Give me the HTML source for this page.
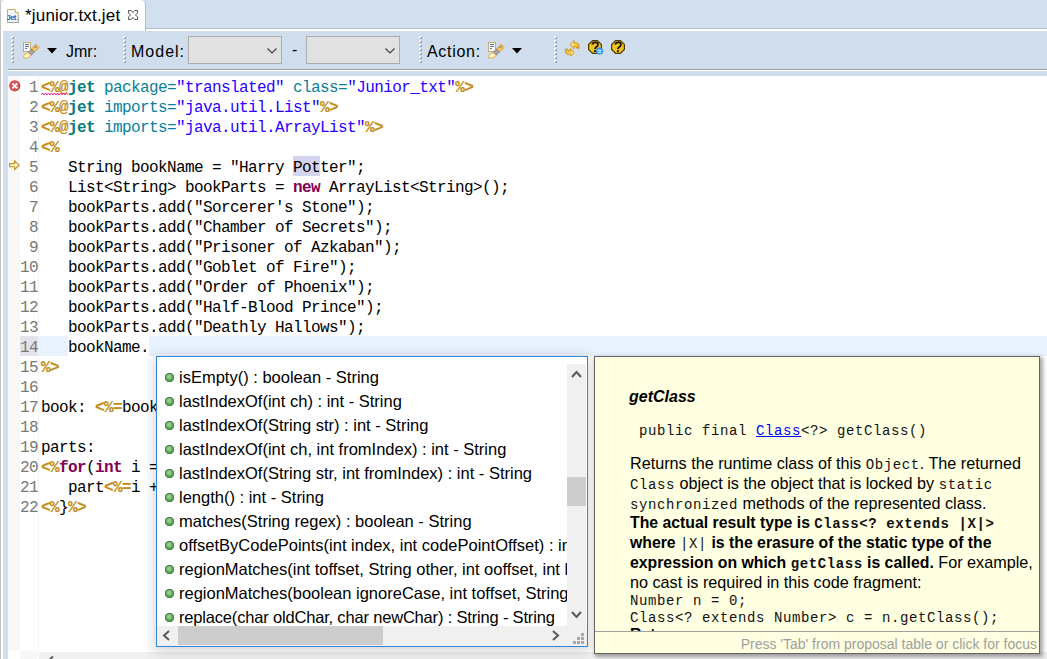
<!DOCTYPE html>
<html><head><meta charset="utf-8">
<style>
*{margin:0;padding:0;box-sizing:border-box}
html,body{width:1047px;height:659px;overflow:hidden;background:#d1dfee;position:relative;font-family:"Liberation Sans",sans-serif}
.a{position:absolute}
.ui{font-family:"Liberation Sans",sans-serif;font-size:15px;color:#000;white-space:pre}
.mono{font-family:"Liberation Mono",monospace}
/* editor */
#code .ln{position:absolute;left:0;height:20px;line-height:20px;font-size:16px;letter-spacing:-0.6px;white-space:pre;font-family:"Liberation Mono",monospace;color:#000}
#nums .n{position:absolute;right:0;height:20px;line-height:20px;font-size:16px;letter-spacing:-0.6px;font-family:"Liberation Mono",monospace;color:#787878;text-align:right}
.d{color:#c48c12;font-weight:bold;-webkit-text-stroke:0.15px #c48c12}
.jk{color:#0a7b7b;font-weight:bold}
.at{color:#08809a}
.st{color:#2a00ff}
.kw{color:#7f0055;font-weight:bold}
.grip{position:absolute;width:3px}
.grip i{position:absolute;left:0;width:2px;height:2px;background:#f2f5f9;box-shadow:1px 1px 0 #939ba6}
.combo{position:absolute;top:36px;height:28px;background:#e1e1e1;border:1px solid #adadad}
.item{position:absolute;left:0;height:24px;line-height:24px;white-space:pre;font-size:16.5px;color:#000}
.bul{position:absolute;left:8px;top:8px;width:9px;height:9px;border-radius:50%;background:radial-gradient(circle at 45% 40%,#a4d4a4 0,#5aa05a 55%,#3a8a4a 100%);box-shadow:inset 0 0 0 0.8px #2e7a3e}
.info{font-size:16.2px;line-height:20px;color:#000;white-space:pre}
.info code{font-family:"Liberation Mono",monospace;font-size:14px;letter-spacing:0.6px;color:#111}
.info b{font-size:15.8px}
</style></head><body>

<!-- tab -->
<div class="a" style="left:145px;top:28px;width:902px;height:1px;background:#b3bad3"></div>
<div class="a" style="left:0;top:29px;width:1047px;height:2px;background:#fff"></div>
<div class="a" style="left:0;top:0;width:146px;height:31px;background:#fff;border-left:1px solid #c2c2c2;border-right:1px solid #b3bad3;border-top-left-radius:4px;border-top-right-radius:5px;border-bottom:none"></div>
<div class="a" style="left:0;top:29px;width:1px;height:630px;background:#c2c2c2"></div>
<div class="a" style="left:1px;top:31px;width:2px;height:628px;background:#fff"></div>
<!-- tab icon -->
<svg class="a" style="left:7px;top:9px" width="12" height="14" viewBox="0 0 12 14">
<path d="M0.5 13.5V0.5H8.2V3.6H11.3V13.5" fill="#f0f5fc" stroke="#c9ac5c"/>
<path d="M0.5 13.5H11.3V9" fill="none" stroke="#a0a0a0"/>
<text x="-0.6" y="11" font-family="Liberation Sans" font-weight="bold" font-size="7.6" letter-spacing="-0.5" fill="#2466c0">Jet</text>
</svg>
<div class="a ui" style="left:25px;top:6px;font-size:17px;line-height:20px;letter-spacing:0.18px">*junior.txt.jet</div>
<svg class="a" style="left:128px;top:10px" width="10" height="10" viewBox="0 0 10 10">
<path d="M0.5 0.5H3.2L5 2.6L6.8 0.5H9.5V3.2L7.4 5L9.5 6.8V9.5H6.8L5 7.4L3.2 9.5H0.5V6.8L2.6 5L0.5 3.2Z" fill="#fff" stroke="#555" stroke-width="1"/>
</svg>

<!-- toolbar -->
<div class="a" style="left:3px;top:31px;width:1044px;height:38px;background:#cfdded"></div>
<div class="a" style="left:8px;top:69px;width:1039px;height:1px;background:#a0a0a0"></div>
<div class="a" style="left:8px;top:70px;width:1039px;height:1px;background:#fff"></div>
<div class="a" style="left:3px;top:71px;width:1044px;height:5px;background:#cfdded"></div>

<div class="grip" style="left:11px;top:36px"><i style="top:0"></i><i style="top:4px"></i><i style="top:8px"></i><i style="top:12px"></i><i style="top:16px"></i><i style="top:20px"></i><i style="top:24px"></i></div>
<!-- jmr icon -->
<svg class="a" style="left:23px;top:42px" width="17" height="17" viewBox="0 0 17 17">
<rect x="0.5" y="0.5" width="7" height="9" fill="#fbfcff" stroke="#c2ae70"/>
<path d="M2 2.5h4M2 4.5h4M2 6.5h2" stroke="#5073b0" stroke-width="1"/>
<path d="M8.5 7L12.8 2.2L16 5.4L11.4 10Z" fill="#f3cc62" stroke="#e39016" stroke-width="0.9"/>
<circle cx="13.2" cy="4.6" r="0.7" fill="#3b5fa8"/><circle cx="12.2" cy="5.6" r="0.7" fill="#3b5fa8"/>
<path d="M5 10.4L8.5 7L11.4 10L8 13.6Z" fill="#a6a2b0" stroke="#7d6a4a" stroke-width="0.6"/>
<path d="M0.5 15.8L1.2 12.6L5 10.4L8 13.6L4.8 16Z" fill="#fff6c4" stroke="#e8a030" stroke-width="0.8"/>
</svg>
<svg class="a" style="left:47px;top:48px" width="10" height="6"><path d="M0 0H10L5 5.5Z" fill="#000"/></svg>
<div class="a ui" style="left:66px;top:42px;line-height:20px;font-size:16px">Jmr:</div>

<div class="grip" style="left:123px;top:36px"><i style="top:0"></i><i style="top:4px"></i><i style="top:8px"></i><i style="top:12px"></i><i style="top:16px"></i><i style="top:20px"></i><i style="top:24px"></i></div>
<div class="a ui" style="left:131px;top:42px;line-height:20px;font-size:16px;letter-spacing:1px">Model:</div>
<div class="combo" style="left:188px;width:94px"></div>
<svg class="a" style="left:267px;top:48px" width="10" height="6"><path d="M0.5 0.5L5 5L9.5 0.5" fill="none" stroke="#404040" stroke-width="1.2"/></svg>
<div class="a ui" style="left:292px;top:40px;line-height:20px;font-size:16px">-</div>
<div class="combo" style="left:306px;width:94px"></div>
<svg class="a" style="left:385px;top:48px" width="10" height="6"><path d="M0.5 0.5L5 5L9.5 0.5" fill="none" stroke="#404040" stroke-width="1.2"/></svg>

<div class="grip" style="left:419px;top:36px"><i style="top:0"></i><i style="top:4px"></i><i style="top:8px"></i><i style="top:12px"></i><i style="top:16px"></i><i style="top:20px"></i><i style="top:24px"></i></div>
<div class="a ui" style="left:427px;top:42px;line-height:20px;font-size:16px;letter-spacing:0.7px">Action:</div>
<svg class="a" style="left:488px;top:42px" width="17" height="17" viewBox="0 0 17 17">
<rect x="0.5" y="0.5" width="7" height="9" fill="#fbfcff" stroke="#c2ae70"/>
<path d="M2 2.5h4M2 4.5h4M2 6.5h2" stroke="#5073b0" stroke-width="1"/>
<path d="M8.5 7L12.8 2.2L16 5.4L11.4 10Z" fill="#f3cc62" stroke="#e39016" stroke-width="0.9"/>
<circle cx="13.2" cy="4.6" r="0.7" fill="#3b5fa8"/><circle cx="12.2" cy="5.6" r="0.7" fill="#3b5fa8"/>
<path d="M5 10.4L8.5 7L11.4 10L8 13.6Z" fill="#a6a2b0" stroke="#7d6a4a" stroke-width="0.6"/>
<path d="M0.5 15.8L1.2 12.6L5 10.4L8 13.6L4.8 16Z" fill="#fff6c4" stroke="#e8a030" stroke-width="0.8"/>
</svg>
<svg class="a" style="left:512px;top:48px" width="10" height="6"><path d="M0 0H10L5 5.5Z" fill="#000"/></svg>

<div class="grip" style="left:554px;top:36px"><i style="top:0"></i><i style="top:4px"></i><i style="top:8px"></i><i style="top:12px"></i><i style="top:16px"></i><i style="top:20px"></i><i style="top:24px"></i></div>
<!-- sync icon -->
<svg class="a" style="left:564px;top:39px" width="17" height="17" viewBox="0 0 17 17">
<defs><linearGradient id="gy" x1="0" y1="0" x2="1" y2="1"><stop offset="0" stop-color="#fff6c0"/><stop offset="0.6" stop-color="#f2c84a"/><stop offset="1" stop-color="#e0a020"/></linearGradient></defs>
<path d="M6.2 5.6L10 1.4V3.8H12.6Q15 4.2 15 7V9.2H12.8Q12.8 7.6 11.4 7.6H10V9.8Z" fill="url(#gy)" stroke="#d38e12" stroke-width="0.9" stroke-linejoin="round"/>
<path d="M6.2 5.6L10 1.4V3.8H12.6Q15 4.2 15 7V9.2H12.8Q12.8 7.6 11.4 7.6H10V9.8Z" transform="rotate(180 8.2 9.6)" fill="url(#gy)" stroke="#d38e12" stroke-width="0.9" stroke-linejoin="round"/>
</svg>
<!-- help icons -->
<svg class="a" style="left:588px;top:40px" width="16" height="15" viewBox="0 0 16 15">
<path d="M4.6 0.6H9.4L13.4 4.6V9.4L9.4 13.4H4.6L0.6 9.4V4.6Z" fill="#f2c21e" stroke="#4e3a08" stroke-width="1.2"/>
<path d="M4.4 4.6Q4.6 2.4 7.2 2.4Q10 2.4 10 4.6Q10 6.2 8 7.2Q7.2 7.8 7 9.2" fill="none" stroke="#111" stroke-width="1.7"/>
<rect x="6" y="10.2" width="1.8" height="1.8" fill="#111"/>
<circle cx="11.6" cy="11" r="3.6" fill="#2d8ef0"/>
<path d="M9.6 10.2h4M9.6 12.2h4" stroke="#fff" stroke-width="1"/>
</svg>
<svg class="a" style="left:611px;top:40px" width="15" height="15" viewBox="0 0 15 15">
<path d="M4.6 0.6H9.4L13.4 4.6V9.4L9.4 13.4H4.6L0.6 9.4V4.6Z" fill="#f2c21e" stroke="#4e3a08" stroke-width="1.2"/>
<path d="M4.4 4.6Q4.6 2.4 7.2 2.4Q10 2.4 10 4.6Q10 6.2 8 7.2Q7.2 7.8 7 9.2" fill="none" stroke="#111" stroke-width="1.7"/>
<rect x="6" y="10.2" width="1.8" height="1.8" fill="#111"/>
</svg>

<!-- editor -->
<div class="a" style="left:8px;top:76px;width:1039px;height:583px;background:#fff"></div>
<div class="a" style="left:8px;top:76px;width:12px;height:575px;background:#f8f8f8"></div>
<div class="a" style="left:38px;top:76px;width:1px;height:575px;background:#f3f3f3"></div>
<!-- current line -->
<div class="a" style="left:39px;top:336px;width:1008px;height:20px;background:#e8f2fe"></div>
<div class="a" style="left:68px;top:336px;width:81px;height:20px;background:#fff"></div>
<div class="a" style="left:20px;top:336px;width:18px;height:20px;background:#e4e2ea"></div>
<!-- Pot highlight -->
<div class="a" style="left:293px;top:156px;width:27px;height:20px;background:#d4d4f0"></div>

<!-- error icon -->
<svg class="a" style="left:9px;top:80px" width="12" height="12" viewBox="0 0 12 12">
<circle cx="5.8" cy="5.8" r="5.6" fill="#d04848"/>
<circle cx="5.8" cy="5.8" r="4.2" fill="#dc5c5c"/>
<path d="M3.3 3.3L8.3 8.3M8.3 3.3L3.3 8.3" stroke="#fff" stroke-width="1.8"/>
</svg>
<!-- arrow icon -->
<svg class="a" style="left:9px;top:160px" width="12" height="11" viewBox="0 0 12 11">
<path d="M0.6 3.6H5.6V0.9L10.2 5.2L5.6 9.5V6.8H0.6Z" fill="#fffbe6" stroke="#c98e18" stroke-width="1.1" stroke-linejoin="miter"/>
</svg>

<div id="nums" class="a" style="left:20px;top:78px;width:18px;height:575px">
<div class="n" style="top:0">1</div><div class="n" style="top:20px">2</div><div class="n" style="top:40px">3</div><div class="n" style="top:60px">4</div><div class="n" style="top:80px">5</div><div class="n" style="top:100px">6</div><div class="n" style="top:120px">7</div><div class="n" style="top:140px">8</div><div class="n" style="top:160px">9</div><div class="n" style="top:180px">10</div><div class="n" style="top:200px">11</div><div class="n" style="top:220px">12</div><div class="n" style="top:240px">13</div><div class="n" style="top:260px">14</div><div class="n" style="top:280px">15</div><div class="n" style="top:300px">16</div><div class="n" style="top:320px">17</div><div class="n" style="top:340px">18</div><div class="n" style="top:360px">19</div><div class="n" style="top:380px">20</div><div class="n" style="top:400px">21</div><div class="n" style="top:420px">22</div>
</div>

<div id="code" class="a" style="left:41px;top:78px;width:1006px;height:575px">
<div class="ln" style="top:0"><span class="d">&lt;%@</span><span class="jk">jet</span> <span class="at">package=</span><span class="st">"translated"</span> <span class="at">class=</span><span class="st">"Junior_txt"</span><span class="d">%&gt;</span></div>
<div class="ln" style="top:20px"><span class="d">&lt;%@</span><span class="jk">jet</span> <span class="at">imports=</span><span class="st">"java.util.List"</span><span class="d">%&gt;</span></div>
<div class="ln" style="top:40px"><span class="d">&lt;%@</span><span class="jk">jet</span> <span class="at">imports=</span><span class="st">"java.util.ArrayList"</span><span class="d">%&gt;</span></div>
<div class="ln" style="top:60px"><span class="d">&lt;%</span></div>
<div class="ln" style="top:80px">   String bookName = "Harry Potter";</div>
<div class="ln" style="top:100px">   List&lt;String&gt; bookParts = <span class="kw">new</span> ArrayList&lt;String&gt;();</div>
<div class="ln" style="top:120px">   bookParts.add("Sorcerer's Stone");</div>
<div class="ln" style="top:140px">   bookParts.add("Chamber of Secrets");</div>
<div class="ln" style="top:160px">   bookParts.add("Prisoner of Azkaban");</div>
<div class="ln" style="top:180px">   bookParts.add("Goblet of Fire");</div>
<div class="ln" style="top:200px">   bookParts.add("Order of Phoenix");</div>
<div class="ln" style="top:220px">   bookParts.add("Half-Blood Prince");</div>
<div class="ln" style="top:240px">   bookParts.add("Deathly Hallows");</div>
<div class="ln" style="top:260px">   bookName.</div>
<div class="ln" style="top:280px"><span class="d">%&gt;</span></div>
<div class="ln" style="top:320px">book: <span class="d">&lt;%=</span>bookName<span class="d">%&gt;</span></div>
<div class="ln" style="top:360px">parts:</div>
<div class="ln" style="top:380px"><span class="d">&lt;%</span><span class="kw">for</span>(<span class="kw">int</span> i = 0; i &lt; bookParts.size(); i++) {<span class="d">%&gt;</span></div>
<div class="ln" style="top:400px">   part<span class="d">&lt;%=</span>i + 1<span class="d">%&gt;</span>: <span class="d">&lt;%=</span>bookParts.get(i)<span class="d">%&gt;</span></div>
<div class="ln" style="top:420px"><span class="d">&lt;%</span>}<span class="d">%&gt;</span></div>
</div>
<!-- squiggle -->
<svg class="a" style="left:41px;top:92px" width="27" height="4" viewBox="0 0 27 4"><path d="M0 3L1.5 1L3 3L4.5 1L6 3L7.5 1L9 3L10.5 1L12 3L13.5 1L15 3L16.5 1L18 3L19.5 1L21 3L22.5 1L24 3L25.5 1L27 3" fill="none" stroke="#ff1090" stroke-width="0.9"/></svg>

<!-- editor h-scrollbar -->
<div class="a" style="left:39px;top:652px;width:1008px;height:7px;background:#f0f0f0"></div>
<div class="a" style="left:20px;top:651px;width:18px;height:8px;background:#f7f7f7"></div>
<svg class="a" style="left:47px;top:656px" width="8" height="3"><path d="M6 0.5L3 3" stroke="#606060" stroke-width="2"/></svg>


<!-- completion popup shadow -->
<div class="a" style="left:156px;top:356px;width:432px;height:291px;box-shadow:0 3px 12px 2px rgba(0,0,0,0.16)"></div>
<div class="a" style="left:594px;top:356px;width:446px;height:298px;box-shadow:2px 2px 4px 1px rgba(0,0,0,0.35)"></div>
<!-- completion popup -->
<div class="a" style="left:156px;top:356px;width:432px;height:291px;background:#fff;border:1px solid #2f86dc;overflow:hidden">
 <div class="a" style="left:0;top:0;width:410px;height:269px;overflow:hidden">
  <div class="item" style="top:8px"><i class="bul"></i><span class="a" style="left:22px;top:0">isEmpty() : boolean - String</span></div>
  <div class="item" style="top:32px"><i class="bul"></i><span class="a" style="left:22px;top:0">lastIndexOf(int ch) : int - String</span></div>
  <div class="item" style="top:56px"><i class="bul"></i><span class="a" style="left:22px;top:0">lastIndexOf(String str) : int - String</span></div>
  <div class="item" style="top:80px"><i class="bul"></i><span class="a" style="left:22px;top:0">lastIndexOf(int ch, int fromIndex) : int - String</span></div>
  <div class="item" style="top:104px"><i class="bul"></i><span class="a" style="left:22px;top:0">lastIndexOf(String str, int fromIndex) : int - String</span></div>
  <div class="item" style="top:128px"><i class="bul"></i><span class="a" style="left:22px;top:0">length() : int - String</span></div>
  <div class="item" style="top:152px"><i class="bul"></i><span class="a" style="left:22px;top:0">matches(String regex) : boolean - String</span></div>
  <div class="item" style="top:176px"><i class="bul"></i><span class="a" style="left:22px;top:0">offsetByCodePoints(int index, int codePointOffset) : int - String</span></div>
  <div class="item" style="top:200px"><i class="bul"></i><span class="a" style="left:22px;top:0">regionMatches(int toffset, String other, int ooffset, int len) : boolean - String</span></div>
  <div class="item" style="top:224px"><i class="bul"></i><span class="a" style="left:22px;top:0">regionMatches(boolean ignoreCase, int toffset, String other, int ooffset, int len) : boolean - String</span></div>
  <div class="item" style="top:248px"><i class="bul"></i><span class="a" style="left:22px;top:0;letter-spacing:-0.18px">replace(char oldChar, char newChar) : String - String</span></div>
 </div>
 <!-- v scrollbar -->
 <div class="a" style="left:410px;top:7px;width:19px;height:262px;background:#f0f0f0"></div>
 <div class="a" style="left:410px;top:120px;width:19px;height:29px;background:#cdcdcd"></div>
 <svg class="a" style="left:414px;top:13px" width="11" height="8"><path d="M1 7L5.5 2L10 7" fill="none" stroke="#5a5a5a" stroke-width="2"/></svg>
 <svg class="a" style="left:414px;top:254px" width="11" height="8"><path d="M1 1L5.5 6L10 1" fill="none" stroke="#5a5a5a" stroke-width="2"/></svg>
 <!-- h scrollbar -->
 <div class="a" style="left:0;top:269px;width:430px;height:20px;background:#f0f0f0"></div>
 <div class="a" style="left:21px;top:269px;width:205px;height:19px;background:#cdcdcd"></div>
 <svg class="a" style="left:5px;top:273px" width="8" height="11"><path d="M7 1L2 5.5L7 10" fill="none" stroke="#5a5a5a" stroke-width="2"/></svg>
 <svg class="a" style="left:395px;top:273px" width="8" height="11"><path d="M1 1L6 5.5L1 10" fill="none" stroke="#5a5a5a" stroke-width="2"/></svg>
 <svg class="a" style="left:416px;top:276px" width="11" height="11"><g fill="#a8a8a8"><rect x="8" y="0" width="3" height="3"/><rect x="4" y="4" width="3" height="3"/><rect x="8" y="4" width="3" height="3"/><rect x="0" y="8" width="3" height="3"/><rect x="4" y="8" width="3" height="3"/><rect x="8" y="8" width="3" height="3"/></g></svg>
</div>

<!-- info popup -->
<div class="a" style="left:594px;top:356px;width:446px;height:298px;background:#ffffe1;border:1px solid #646464;overflow:hidden">
 <div class="a" style="left:34px;top:27px;font-size:16px;line-height:26px;font-weight:bold;font-style:italic;white-space:pre">getClass</div>
 <div class="a mono" style="left:35px;top:66px;font-size:14px;letter-spacing:0.6px;line-height:17px;white-space:pre;color:#111"> public final <span style="color:#0000ff;text-decoration:underline">Class</span>&lt;?&gt; getClass()</div>
 <div class="a" style="left:0;top:0;width:444px;height:274px;overflow:hidden">
  <div class="a info" style="left:35px;top:96px">Returns the runtime class of this <code>Object</code>. The returned</div>
  <div class="a info" style="left:35px;top:116px"><code>Class</code> object is the object that is locked by <code>static</code></div>
  <div class="a info" style="left:35px;top:136px"><code>synchronized</code> methods of the represented class.</div>
  <div class="a info" style="left:35px;top:155px"><b>The actual result type is <code>Class&lt;? extends |X|&gt;</code></b></div>
  <div class="a info" style="left:35px;top:175px"><b>where </b><code>|X|</code><b> is the erasure of the static type of the</b></div>
  <div class="a info" style="left:35px;top:195px"><b>expression on which <code>getClass</code> is called.</b> For example,</div>
  <div class="a info" style="left:35px;top:215px">no cast is required in this code fragment:</div>
  <div class="a mono" style="left:35px;top:236px;font-size:14px;letter-spacing:0.6px;line-height:17px;white-space:pre;color:#111">Number n = 0;
Class&lt;? extends Number&gt; c = n.getClass();</div>
  <div class="a info" style="left:35px;top:267px"><b>Returns:</b></div>
 </div>
 <div class="a" style="left:0;top:274px;width:444px;height:1px;background:#a0a0a0"></div>
 <div class="a" style="right:2px;top:277px;font-size:14px;line-height:20px;color:#a0a0a0;white-space:pre">Press 'Tab' from proposal table or click for focus</div>
</div>

</body></html>
